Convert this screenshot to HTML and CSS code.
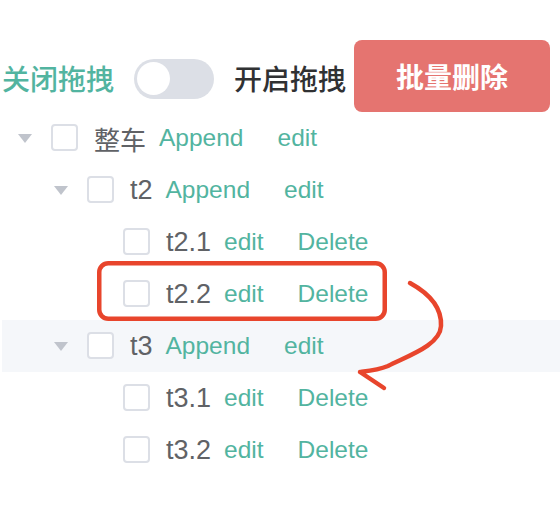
FILE: index.html
```html
<!DOCTYPE html>
<html lang="zh">
<head>
<meta charset="utf-8">
<link rel="stylesheet" href="styles.css">
</head>
<body>
<div class="page">
  <div class="toolbar">
    <span class="lbl lbl-off">关闭拖拽</span>
    <span class="switch"><span class="knob"></span></span>
    <span class="lbl lbl-on">开启拖拽</span>
    <button class="btn-danger">批量删除</button>
  </div>
  <div class="tree">
    <div class="node lvl1">
      <span class="exp"><i class="caret"></i></span><span class="cb"></span>
      <span class="label cjk">整车</span>
      <span class="acts"><a>Append</a><a>edit</a></span>
    </div>
    <div class="node lvl2">
      <span class="exp"><i class="caret"></i></span><span class="cb"></span>
      <span class="label">t2</span>
      <span class="acts"><a>Append</a><a>edit</a></span>
    </div>
    <div class="node lvl3">
      <span class="exp"></span><span class="cb"></span>
      <span class="label">t2.1</span>
      <span class="acts"><a>edit</a><a>Delete</a></span>
    </div>
    <div class="node lvl3">
      <span class="exp"></span><span class="cb"></span>
      <span class="label">t2.2</span>
      <span class="acts"><a>edit</a><a>Delete</a></span>
    </div>
    <div class="node lvl2 hover">
      <span class="exp"><i class="caret"></i></span><span class="cb"></span>
      <span class="label">t3</span>
      <span class="acts"><a>Append</a><a>edit</a></span>
    </div>
    <div class="node lvl3">
      <span class="exp"></span><span class="cb"></span>
      <span class="label">t3.1</span>
      <span class="acts"><a>edit</a><a>Delete</a></span>
    </div>
    <div class="node lvl3">
      <span class="exp"></span><span class="cb"></span>
      <span class="label">t3.2</span>
      <span class="acts"><a>edit</a><a>Delete</a></span>
    </div>
  </div>
  <svg class="annot" width="560" height="528" viewBox="0 0 560 528">
    <rect x="99.25" y="263.25" width="285.5" height="55.5" rx="9" fill="none" stroke="#e8452c" stroke-width="4.5"/>
    <path d="M410 283 C430 294, 442 308, 441 326 C440 345, 410 355, 388 366 C378 370, 368 371, 360 372 L384 388" fill="none" stroke="#e8452c" stroke-width="4.5" stroke-linecap="round" stroke-linejoin="round"/>
  </svg>
</div>
</body>
</html>
```
FILE: styles.css
```css
html, body {
  margin: 0;
  padding: 0;
  background: #ffffff;
}
body {
  font-family: "Liberation Sans", "Noto Sans CJK SC", sans-serif;
}
.page {
  position: relative;
  width: 560px;
  height: 528px;
  padding-left: 2px;
  box-sizing: border-box;
}
.toolbar {
  display: flex;
  align-items: center;
  padding-top: 40px;
  height: 72px;
}
.lbl {
  font-family: "Noto Sans CJK SC", sans-serif;
  font-size: 28px;
  font-weight: 500;
  line-height: 40px;
  margin-top: 4px;
}
.lbl-off { color: #52b4a0; }
.lbl-on { color: #303133; }
.switch {
  width: 80px;
  height: 40px;
  border-radius: 20px;
  background: #dcdfe6;
  margin: 6px 20px 0 20px;
  position: relative;
  box-sizing: border-box;
  padding: 4px 3px;
}
.knob {
  display: block;
  width: 33px;
  height: 33px;
  border-radius: 50%;
  background: #fff;
  margin-top: -1px;
}
.btn-danger {
  margin-left: 8px;
  width: 196px;
  height: 72px;
  border: none;
  border-radius: 8px;
  background: #e57470;
  color: #fff;
  font-family: "Noto Sans CJK SC", sans-serif;
  font-size: 28px;
  font-weight: 700;
  padding: 0;
}
.node {
  display: flex;
  align-items: center;
  height: 52px;
  color: #606266;
}
.node.hover { background: #f5f7fa; }
.lvl2 { padding-left: 36px; }
.lvl3 { padding-left: 72px; }
.exp {
  width: 49px;
  padding-left: 16px;
  box-sizing: border-box;
  display: flex;
  align-items: center;
}
.caret {
  display: block;
  width: 0;
  height: 0;
  border-left: 7.5px solid transparent;
  border-right: 7.5px solid transparent;
  border-top: 9px solid #c0c4cc;
  margin-top: 1px;
}
.cb {
  width: 27px;
  height: 27px;
  box-sizing: border-box;
  border: 2px solid #dcdfe6;
  border-radius: 4px;
  background: #fff;
  margin-top: -2px;
}
.label {
  font-size: 27px;
  margin-left: 16px;
  margin-right: 13px;
}
.label.cjk {
  font-family: "Noto Sans CJK SC", sans-serif;
  font-size: 26px;
  margin-left: 16px;
  margin-right: 13px;
}
.acts {
  display: flex;
  gap: 34px;
  font-size: 24.5px;
  color: #52b4a0;
}
.acts a { display: block; }
.annot {
  position: absolute;
  left: 0;
  top: 0;
  pointer-events: none;
}
```
